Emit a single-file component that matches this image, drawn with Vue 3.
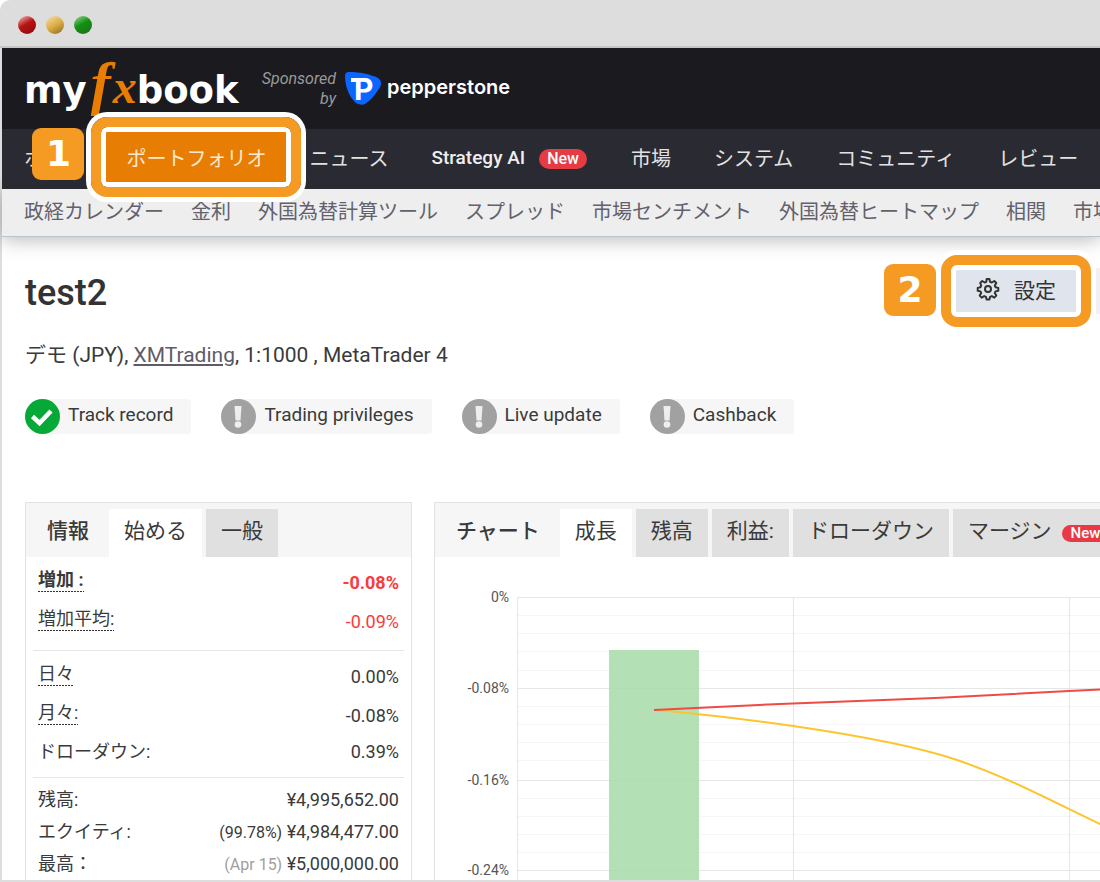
<script setup>
const navItems = [
  { label: 'ホーム' },
  { label: 'ポートフォリオ', step: 1 },
  { label: 'ニュース' },
  { label: 'Strategy AI', isNew: true },
  { label: '市場' },
  { label: 'システム' },
  { label: 'コミュニティ' },
  { label: 'レビュー' },
]
const subItems = ['政経カレンダー', '金利', '外国為替計算ツール', 'スプレッド', '市場センチメント', '外国為替ヒートマップ', '相関', '市場']
const checks = [
  { label: 'Track record', ok: true },
  { label: 'Trading privileges' },
  { label: 'Live update' },
  { label: 'Cashback' },
]
const infoTabs = ['始める', '一般']
const chartTabs = [
  { label: '成長' },
  { label: '残高' },
  { label: '利益:' },
  { label: 'ドローダウン' },
  { label: 'マージン', isNew: true },
]
const groups = [
  [
    { label: '増加 :', value: '-0.08%', tip: true, bold: true, loss: true },
    { label: '増加平均:', value: '-0.09%', tip: true, loss: true },
  ],
  [
    { label: '日々', value: '0.00%', tip: true },
    { label: '月々:', value: '-0.08%', tip: true },
    { label: 'ドローダウン:', value: '0.39%' },
  ],
  [
    { label: '残高:', value: '¥4,995,652.00' },
    { label: 'エクイティ:', note: '(99.78%)', value: '¥4,984,477.00' },
    { label: '最高：', note: '(Apr 15)', faint: true, value: '¥5,000,000.00' },
  ],
]
const majorLines = [
  { y: 40, label: '0%' },
  { y: 131, label: '-0.08%' },
  { y: 223, label: '-0.16%' },
  { y: 313, label: '-0.24%' },
]
const minorLines = [58, 76, 94, 113, 149, 167, 185, 203, 241, 259, 277, 295]
const columns = [82, 358, 634]
</script>

<template>
  <div class="window">
    <div class="titlebar">
      <span class="light red"></span>
      <span class="light yellow"></span>
      <span class="light green"></span>
    </div>

    <div class="screen">
      <header class="brandbar">
        <a class="logo" href="#" aria-label="myfxbook">my<span class="logo-f">f</span><span class="logo-x">x</span>book</a>
        <span class="sponsored">Sponsored<br />by</span>
        <a class="sponsor" href="#">
          <svg width="38" height="36" viewBox="0 0 38 36" aria-hidden="true">
            <path d="M1 5Q1 1 5 1C15 1 26 3 34 7Q39 10 36 16C32 23 27 29 21 33Q17 35 12 32C5 26 1 15 1 5Z" fill="#0a66ff" />
            <rect x="7" y="7" width="8" height="4" fill="#fff" />
            <text x="10" y="29" class="sponsor-mark">P</text>
          </svg>
          <span class="sponsor-name">pepperstone</span>
        </a>
      </header>

      <nav class="nav">
        <a v-for="item in navItems" :key="item.label" href="#" class="nav-link" :class="{ active: item.step, latin: item.isNew }">
          <span v-if="item.step" class="step step-nav">{{ item.step }}</span>
          {{ item.label }}
          <span v-if="item.isNew" class="pill">New</span>
        </a>
      </nav>

      <nav class="subnav">
        <a v-for="(item, i) in subItems" :key="i" href="#">{{ item }}</a>
      </nav>

      <main class="content">
        <div class="heading">
          <h1>test2</h1>
          <div class="actions">
            <button type="button" class="settings">
              <span class="step step-settings">2</span>
              <svg width="24" height="24" viewBox="0 0 24 24" fill="none" stroke="#333" stroke-width="2" stroke-linejoin="round" aria-hidden="true">
                <circle cx="12" cy="12" r="3" />
                <path d="M10.6 2h2.8l.7 2.8 1.7.7 2.5-1.5 2 2-1.5 2.5.7 1.7 2.8.7v2.8l-2.8.7-.7 1.7 1.5 2.5-2 2-2.5-1.5-1.7.7-.7 2.8h-2.8l-.7-2.8-1.7-.7-2.5 1.5-2-2 1.500-2.500-.7-1.700-2.800-.7v-2.800l2.800-.7.7-1.700L4.200 6l2-2 2.500 1.500 1.700-.7z" />
              </svg>
              設定
            </button>
            <button type="button" class="next" aria-label="次へ"></button>
          </div>
        </div>

        <p class="meta">デモ (JPY), <a href="#">XMTrading</a>, 1:1000 , MetaTrader 4</p>

        <ul class="checks">
          <li v-for="c in checks" :key="c.label">
            <svg width="35" height="35" viewBox="0 0 35 35" aria-hidden="true">
              <circle cx="17.500" cy="17.500" r="17.500" :fill="c.ok ? '#06a938' : '#a1a1a1'" />
              <path v-if="c.ok" d="M7.500 17.500l7 6.500 11.500-12" fill="none" stroke="#fff" stroke-width="4.500" />
              <template v-else>
                <path d="M13.500 7h7l-1 14.500h-5z" fill="#eee" />
                <circle cx="17" cy="25.500" r="3.300" fill="#eee" />
              </template>
            </svg>
            {{ c.label }}
          </li>
        </ul>

        <div class="panels">
          <section class="panel info">
            <div class="tabs">
              <h2>情報</h2>
              <button v-for="(t, i) in infoTabs" :key="t" type="button" :class="{ current: i === 0 }">{{ t }}</button>
            </div>
            <dl v-for="(rows, g) in groups" :key="g" class="group" :class="{ compact: g === 2 }">
              <div v-for="r in rows" :key="r.label" class="row" :class="{ tall: r.tip, bold: r.bold, loss: r.loss }">
                <dt><span :class="{ tip: r.tip }">{{ r.label }}</span></dt>
                <dd><small v-if="r.note" :class="{ faint: r.faint }">{{ r.note }}</small> {{ r.value }}</dd>
              </div>
            </dl>
          </section>

          <section class="panel chart">
            <div class="tabs">
              <h2>チャート</h2>
              <button v-for="(t, i) in chartTabs" :key="t.label" type="button" :class="{ current: i === 0 }">
                {{ t.label }}<span v-if="t.isNew" class="pill small">New</span>
              </button>
            </div>
            <svg class="plot" role="img" aria-label="成長">
              <g stroke="#f6f6f6" stroke-width="1" shape-rendering="crispEdges">
                <line v-for="y in minorLines" :key="y" x1="82" x2="100%" :y1="y" :y2="y" />
              </g>
              <g stroke="#e6e6e6" stroke-width="1" shape-rendering="crispEdges">
                <line v-for="m in majorLines" :key="m.y" x1="82" x2="100%" :y1="m.y" :y2="m.y" />
                <line v-for="x in columns" :key="x" :x1="x" :x2="x" y1="40" y2="100%" />
              </g>
              <text v-for="m in majorLines" :key="m.label" x="74" :y="m.y + 5" text-anchor="end" class="axis">{{ m.label }}</text>
              <rect x="174" y="93" width="90" height="100%" fill="#a9dbab" fill-opacity="0.87" />
              <path d="M219 153C262 156 300 161 358 169C420 178 478 188 522 203C575 221 620 246 665 267L700 283" fill="none" stroke="#fcc52f" stroke-width="2" />
              <path d="M219 153L345 147L500 141L634 134L700 131" fill="none" stroke="#ef4a46" stroke-width="2" />
            </svg>
          </section>
        </div>
      </main>
    </div>
  </div>
</template>

<style>
body {
  margin: 0;
  background: #fff;
}
</style>

<style scoped>
* {
  box-sizing: border-box;
}
.window {
  min-height: 100vh;
  display: flex;
  flex-direction: column;
  overflow: hidden;
  background: #fff;
  border-radius: 10px 0 0 0;
  color: #3a3a3a;
  font-family: Roboto, "Noto Sans CJK JP", sans-serif;
}
a {
  color: inherit;
  text-decoration: none;
}
button {
  border: 0;
  border-radius: 0;
  padding: 0;
  font: inherit;
  color: inherit;
  cursor: pointer;
}
.titlebar {
  display: flex;
  align-items: center;
  gap: 10px;
  height: 48px;
  padding-left: 18px;
  padding-top: 4px;
  background: #ddd;
  border-bottom: 2px solid #c4c6c4;
}
.light {
  width: 18px;
  height: 18px;
  border-radius: 50%;
}
.red {
  background: linear-gradient(150deg, #eeb0b0 5%, #b81414 45%, #8c0808);
}
.yellow {
  background: linear-gradient(150deg, #f3d9a0 5%, #dcae45 50%, #8a6a20);
}
.green {
  background: linear-gradient(150deg, #8fce8f 5%, #119211 45%, #246b24);
}
.screen {
  flex: 1;
  border-left: 2px solid #ddd;
  border-bottom: 2px solid #ddd;
}
.brandbar {
  display: flex;
  align-items: center;
  height: 81px;
  padding-left: 22px;
  background: #1b1a1f;
}
.logo {
  width: 216px;
  padding-top: 4px;
  color: #fff;
  font: 700 37px/60px "DejaVu Sans", sans-serif;
  white-space: nowrap;
}
.logo-f,
.logo-x {
  color: #e87d04;
  font-family: "Liberation Serif", serif;
  font-style: italic;
  font-weight: 700;
  line-height: 1px;
}
.logo-f {
  margin: 0 2px 0 4px;
  font-size: 60px;
}
.logo-x {
  font-size: 48px;
}
.sponsored {
  width: 96px;
  color: #9a9a9a;
  font-size: 16px;
  font-style: italic;
  line-height: 20px;
  text-align: right;
}
.sponsor {
  display: flex;
  align-items: center;
  gap: 5px;
  margin-left: 8px;
  color: #fff;
  font: 600 20px/30px Inter, sans-serif;
}
.sponsor-name {
  padding-bottom: 4px;
}
.sponsor-mark {
  fill: #fff;
  font: 700 30px Inter, sans-serif;
}
.nav {
  position: relative;
  z-index: 2;
  display: flex;
  align-items: center;
  gap: 3px;
  height: 60px;
  padding: 0 0 4px 2px;
  background: #2a2a32;
  color: #e2e2e2;
  font-size: 20px;
  white-space: nowrap;
}
.nav-link {
  display: flex;
  align-items: center;
  height: 50px;
  padding: 0 20px;
}
.latin {
  color: #eee;
  font-size: 19px;
  font-weight: 500;
  padding-right: 21px;
}
.active {
  position: relative;
  background: #e87d04;
  color: #ffe9cc;
}
.active::after,
.settings::after {
  content: "";
  position: absolute;
  inset: -15px;
  border: 10px solid #f59b24;
  border-radius: 16px;
  box-shadow: 0 0 0 5px #fff, inset 0 0 0 5px #fff;
  pointer-events: none;
}
.step {
  position: absolute;
  width: 52px;
  height: 52px;
  border-radius: 9px;
  background: #f59b24;
  color: #fff;
  font: 700 36px/52px "DejaVu Sans", sans-serif;
  text-align: center;
}
.step-nav {
  left: -74px;
  top: -4px;
}
.step-settings {
  left: -72px;
  top: -6px;
}
.pill {
  margin: 4px 0 0 14px;
  padding: 0 8px;
  border-radius: 10px;
  background: #e63a45;
  color: #fff;
  font-size: 16px;
  font-weight: 500;
  line-height: 20px;
}
.pill.small {
  margin-left: 11px;
  font-size: 15px;
  line-height: 17px;
}
.subnav {
  position: relative;
  z-index: 1;
  display: flex;
  gap: 27px;
  height: 48px;
  padding: 8px 0 0 22px;
  background: #eee;
  border-bottom: 1px solid #b9c4d2;
  box-shadow: 0 2px 20px rgba(0, 0, 0, 0.3);
  color: #62616c;
  font-size: 20px;
  line-height: 30px;
  white-space: nowrap;
}
.content {
  padding: 31px 0 0 23px;
}
.heading {
  display: flex;
  align-items: center;
  justify-content: space-between;
}
h1 {
  margin: 0;
  padding-top: 4px;
  color: #333;
  font-size: 36px;
  font-weight: 500;
  line-height: 42px;
}
.actions {
  position: relative;
  z-index: 1;
  display: flex;
  align-items: center;
  gap: 20px;
}
.settings {
  position: relative;
  display: flex;
  align-items: center;
  justify-content: center;
  gap: 14px;
  width: 120px;
  height: 42px;
  padding-bottom: 4px;
  background: #e0e4ec;
  color: #333;
  font-size: 21px;
}
.next {
  width: 120px;
  height: 46px;
  margin-right: -116px;
  background: #f1f1f4;
}
.meta {
  margin: 26px 0 0;
  font-size: 21px;
  line-height: 30px;
}
.meta a {
  color: #5f5c69;
  text-decoration: underline;
}
.checks {
  display: flex;
  gap: 30px;
  margin: 29px 0 0;
  padding: 0;
  list-style: none;
  font-size: 19px;
}
.checks li {
  display: flex;
  gap: 8px;
  padding-right: 18px;
  border-radius: 17px 3px 3px 17px;
  background: #f6f6f6;
  line-height: 32px;
}
.panels {
  display: flex;
  gap: 22px;
  margin-top: 68px;
}
.panel {
  border: 1px solid #e2e2e2;
  border-bottom: 0;
}
.info {
  flex: 0 0 387px;
}
.chart {
  flex: 1;
  min-width: 0;
  display: flex;
  flex-direction: column;
  overflow: hidden;
  border-right: 0;
}
.tabs {
  display: flex;
  gap: 4px;
  height: 54px;
  padding-top: 6px;
  background: #f6f6f6;
  font-size: 21px;
  line-height: 44px;
  white-space: nowrap;
}
h2 {
  margin: 0 -4px 0 0;
  padding: 0 20px 0 21px;
  font-size: 21px;
  font-weight: 500;
}
.tabs button {
  flex: none;
  display: flex;
  align-items: center;
  height: 48px;
  padding: 0 15px 4px;
  background: #e0e0e0;
}
.tabs .current {
  background: #fff;
}
.group {
  margin: 0 7px;
  padding: 6px 0 9px;
  border-bottom: 1px solid #e6e6e6;
}
.group.compact {
  padding: 6px 0 0;
  border: 0;
}
.row {
  display: flex;
  align-items: center;
  justify-content: space-between;
  height: 33px;
  padding: 0 5px;
  font-size: 18px;
  line-height: 20px;
}
.tall {
  height: 39px;
}
.tall dt {
  padding-bottom: 4px;
}
.compact .row {
  height: 32px;
}
.bold {
  font-weight: 700;
}
.loss dd {
  color: #fa3a3e;
}
dd {
  margin: 0;
}
small {
  font-size: 16px;
}
.faint {
  color: #a0a0a0;
}
.tip {
  display: block;
  padding-bottom: 2px;
  background: repeating-linear-gradient(90deg, #333 0 2px, transparent 2px 3px) 0 100% / 100% 1px no-repeat;
}
.plot {
  flex: 1;
  width: 100%;
  min-height: 323px;
}
.axis {
  fill: #555;
  font-size: 14px;
}
</style>
